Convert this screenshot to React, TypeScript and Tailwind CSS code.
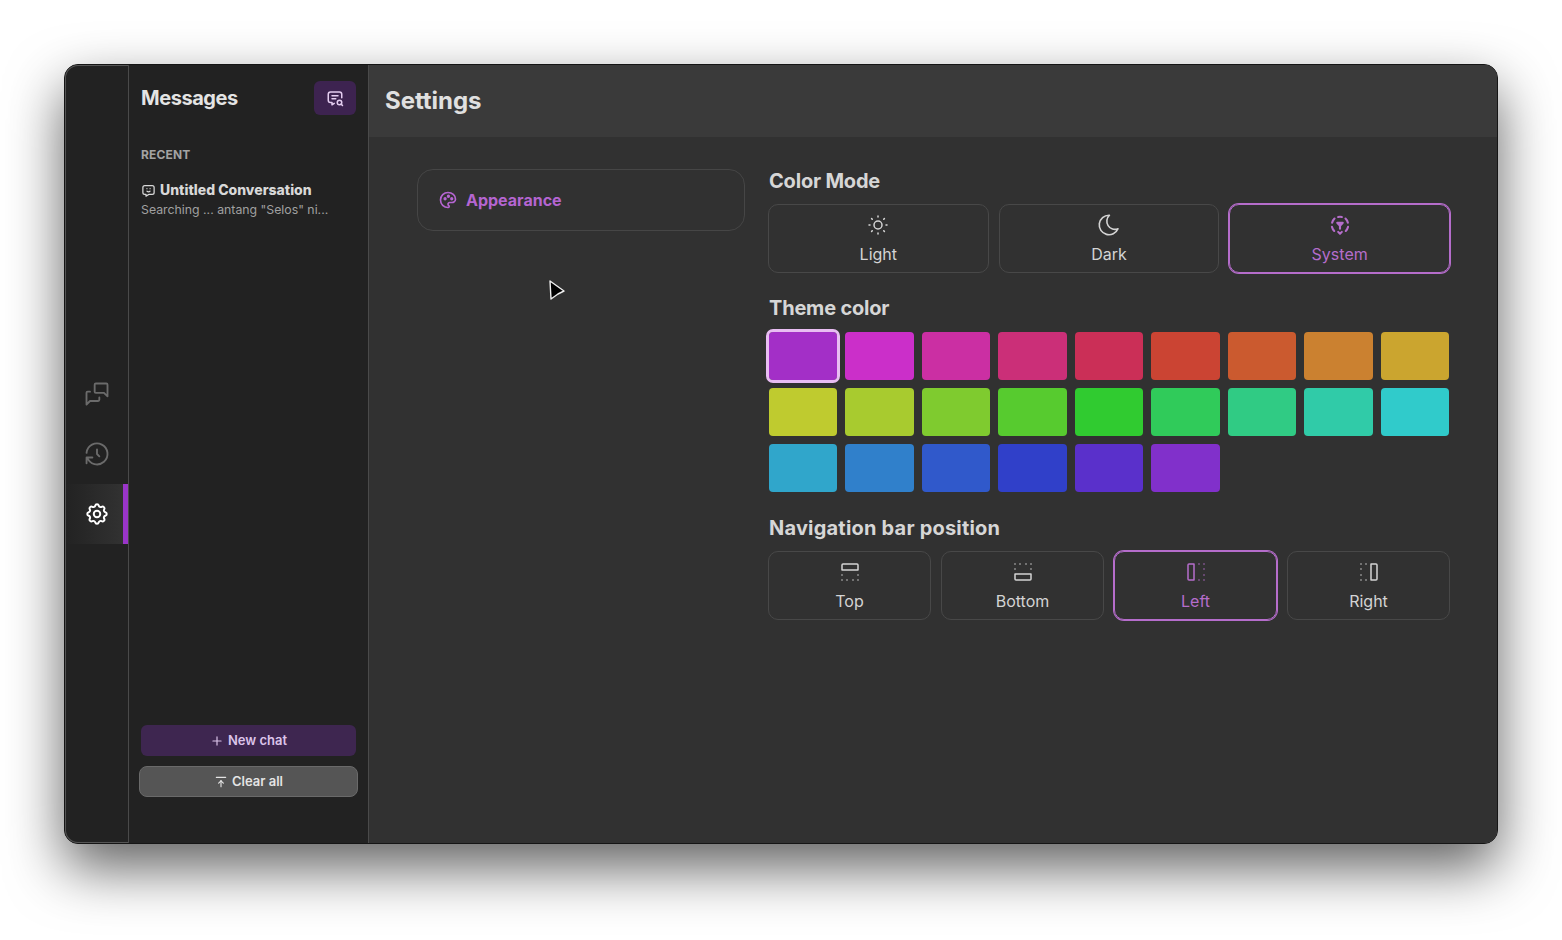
import React from "react";
import {
  TbMessages, TbHistory, TbSettings, TbMessageSearch, TbMessageChatbot, TbPalette, TbSun, TbMoon,
  TbBoxAlignTop, TbBoxAlignBottom, TbBoxAlignLeft, TbBoxAlignRight, TbPlus, TbArrowBarToUp,
} from "react-icons/tb";

const colors = [
  "#a32fc7", "#cb2fc9", "#cb2fa3", "#cb2f78", "#cb2f57", "#cb4433", "#cb5a2f", "#cb8130", "#cba52f",
  "#bfcb2f", "#a8cb2f", "#7fcb2f", "#57cb2f", "#30cb30", "#30cb5a", "#30cb84", "#30cba8", "#30cbcb",
  "#30a6cb", "#3080cb", "#3059cb", "#3040c9", "#5a30cb", "#8130cb",
];

function SystemIcon() {
  return (
    <svg width="22" height="22" viewBox="0 0 24 24" fill="none" stroke="currentColor" strokeWidth="2.3" strokeLinecap="round" strokeLinejoin="round">
      <path d="M10 3.2a9 9 0 0 1 4 0" />
      <path d="M18 5a9 9 0 0 1 2.6 4.5" />
      <path d="M20.8 14a9 9 0 0 1-2.5 4.5" />
      <path d="M5.7 18.5a9 9 0 0 1-2.5-4.5" />
      <path d="M3.4 9.5A9 9 0 0 1 6 5" />
      <path d="M9 9.5h6l-3 3.5z" fill="currentColor" />
      <path d="M12 13v3" />
      <path d="M10 19.5l2 2 2-2" fill="currentColor" />
    </svg>
  );
}

function Option({ icon, label, active }: { icon: React.ReactNode; label: string; active?: boolean }) {
  return (
    <button
      className={
        "flex h-[69px] flex-col items-center gap-[9px] rounded-[10px] border pt-[10px] text-[16px] leading-5 " +
        (active
          ? "border-[#b56dcb] text-[#b56dcb] ring-1 ring-[#b56dcb]"
          : "border-[#484848] text-[#d4d4d4]")
      }
    >
      <span className="flex h-5 items-center">{icon}</span>
      <span>{label}</span>
    </button>
  );
}

function Heading({ children, wide }: { children: React.ReactNode; wide?: boolean }) {
  return (
    <h2
      className={
        "ml-px text-[20px] font-bold leading-[24px] text-[#d6d6d6] " +
        (wide ? "tracking-[0.2px]" : "tracking-[-0.2px]")
      }
    >
      {children}
    </h2>
  );
}

function RailItem({ children, active }: { children: React.ReactNode; active?: boolean }) {
  return (
    <div
      className={
        "relative flex h-[60px] items-center justify-center " +
        (active ? "bg-gradient-to-r from-transparent to-[#333333] text-white" : "text-[#6b6b6b]")
      }
    >
      {children}
      {active && <span className="absolute right-0 top-0 h-full w-[5px] bg-[#9a35c9]" />}
    </div>
  );
}

export default function App() {
  return (
    <div className="h-[940px] w-[1562px] overflow-hidden bg-white pl-16 pt-16 font-['Inter',sans-serif]">
      <div className="relative flex h-[780px] w-[1434px] rounded-[14px] border border-[#151515] bg-[#222222] shadow-[0_24px_56px_rgba(0,0,0,0.62)]">
        <div className="flex min-w-0 flex-1 overflow-hidden rounded-[13px] shadow-[inset_0_0_0_1px_#555555]">
          {/* rail */}
          <nav className="flex w-[63px] shrink-0 flex-col justify-end pb-[299px]">
            <RailItem><TbMessages size={28} strokeWidth={1.6} /></RailItem>
            <RailItem><TbHistory size={28} strokeWidth={1.6} /></RailItem>
            <RailItem active><TbSettings size={26} strokeWidth={1.8} /></RailItem>
          </nav>

          {/* sidebar */}
          <aside className="flex w-[241px] shrink-0 flex-col border-x border-[#4a4a4a] bg-[#222222] px-3 pb-[46px]">
            <div className="flex h-[50px] items-end justify-between">
              <h1 className="text-[20px] font-bold leading-[34px] tracking-[-0.45px] text-[#e4e4e4]">Messages</h1>
              <button className="flex h-[34px] w-[42px] items-center justify-center rounded-md bg-[#3d2350] text-[#e4cdf0]">
                <TbMessageSearch size={18} />
              </button>
            </div>
            <div className="mt-8 text-[12px] font-bold leading-4 tracking-[0.15px] text-[#a3a3a3]">RECENT</div>
            <div className="mt-[17px]">
              <div className="flex items-center gap-1 text-[#d8d8d8]">
                <TbMessageChatbot size={15} />
                <span className="text-[14px] font-extrabold leading-5">Untitled Conversation</span>
              </div>
              <div className="text-[12.3px] leading-5 text-[#a0a0a0]">Searching ... antang "Selos" ni...</div>
            </div>
            <div className="mt-auto flex flex-col items-center gap-[10px]">
              <button className="flex h-[31px] w-full items-center justify-center gap-1 rounded-md bg-[#3e2650] text-[13px] font-semibold text-[#dcc4ea]">
                <TbPlus size={14} /> New chat
              </button>
              <button className="-mx-0.5 flex h-[31px] w-[219px] items-center justify-center gap-1 rounded-lg border border-[#6a6a6a] bg-[#555555] text-[13px] font-semibold text-[#e4e4e4]">
                <TbArrowBarToUp size={14} /> Clear all
              </button>
            </div>
          </aside>

          {/* main */}
          <main className="relative flex min-w-0 flex-1 flex-col bg-[#313131]">
            <header className="flex h-[72px] items-center bg-[#3a3a3a] pl-4">
              <h1 className="text-[24px] font-bold tracking-[-0.05px] text-[#e0e0e0]">Settings</h1>
            </header>
            <div className="flex gap-[23px] pl-[48px] pt-8">
              <div className="w-[328px] shrink-0">
                <div className="flex h-[62px] items-center gap-2 rounded-2xl border border-[#464646] pl-5 text-[#b565d1]">
                  <TbPalette size={20} />
                  <span className="text-[16px] font-bold">Appearance</span>
                </div>
              </div>
              <div className="w-[682px] shrink-0">
                <Heading>Color Mode</Heading>
                <div className="mt-[11px] grid grid-cols-3 gap-2.5">
                  <Option icon={<TbSun size={24} strokeWidth={1.5} />} label="Light" />
                  <Option icon={<TbMoon size={26} strokeWidth={1.5} />} label="Dark" />
                  <Option icon={<SystemIcon />} label="System" active />
                </div>
                <div className="mt-[23px]"><Heading>Theme color</Heading></div>
                <div className="mx-px mt-3 grid grid-cols-9 gap-2">
                  {colors.map((c, i) => (
                    <div
                      key={c}
                      style={{ backgroundColor: c }}
                      className={"h-12 rounded-[4px] " + (i === 0 ? "outline-3 outline-[#e8bdf2]" : "")}
                    />
                  ))}
                </div>
                <div className="mt-[24px]"><Heading wide>Navigation bar position</Heading></div>
                <div className="mt-[11px] grid grid-cols-4 gap-2.5">
                  <Option icon={<TbBoxAlignTop size={24} strokeWidth={1.5} />} label="Top" />
                  <Option icon={<TbBoxAlignBottom size={24} strokeWidth={1.5} />} label="Bottom" />
                  <Option icon={<TbBoxAlignLeft size={24} strokeWidth={1.5} />} label="Left" active />
                  <Option icon={<TbBoxAlignRight size={24} strokeWidth={1.5} />} label="Right" />
                </div>
              </div>
            </div>
            <svg className="absolute left-[179px] top-[214px]" width="18" height="22" viewBox="0 0 18 22">
              <path d="M2 2L16 12L10 15L3 20Z" fill="#000" stroke="#eee" strokeWidth="1.4" strokeLinejoin="round" />
            </svg>
          </main>
        </div>
      </div>
    </div>
  );
}
